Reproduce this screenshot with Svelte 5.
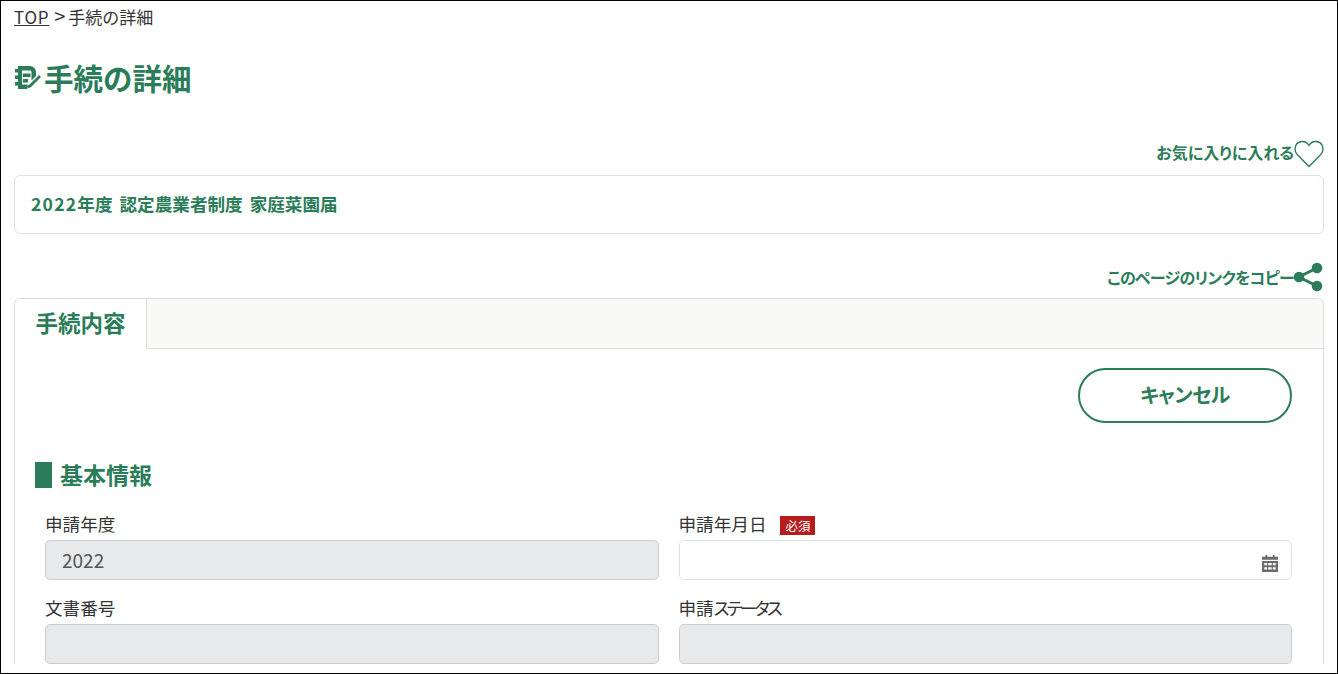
<script lang="ts">
	const fields = [
		{ label: '申請年度', value: '2022', disabled: true },
		{ label: '申請年月日', value: '', required: true, calendar: true },
		{ label: '文書番号', value: '', disabled: true },
		{ label: '申請', kana: 'ステータス', value: '', disabled: true }
	];
</script>

<div class="page">
	<nav class="crumbs"><a href="#top">TOP</a><span class="sep">&gt;</span>手続の詳細</nav>

	<h1 class="title">
		<svg class="title-icon" viewBox="0 0 26 23" width="26" height="23" aria-hidden="true">
			<path d="M3 0h12a6 6 0 0 1 6 6v4l-4.500 4.500V6a1.500 1.500 0 0 0-1.500-1.500H7v14h5.500V23H3z" fill="#2a7d58" />
			<path d="M0 3h3.500v3.500H0zM0 9.500h3.500V13H0zM0 16h3.500v3.500H0z" fill="#2a7d58" />
			<path d="M8 7.500h7.500v3.500H8zM8 13h5v3.500H8z" fill="#2a7d58" />
			<path d="M25 10 15 20l-2.500 1" fill="none" stroke="#2a7d58" stroke-width="2.800" />
		</svg>
		<span class="title-text">手続の詳細</span>
	</h1>

	<div class="action fav">
		<span>お気に入りに入れる</span>
		<svg viewBox="0 0 30 28" width="30" height="28" aria-hidden="true">
			<path d="M15 26.500 3.200 14.500C-.5 10.500.5 2 8 1.500 11 1.300 13.500 3 15 5.500 16.500 3 19 1.300 22 1.500c7.500.5 8.500 9 4.800 13z" fill="#fff" stroke="#2a7d58" stroke-width="1.400" />
		</svg>
	</div>

	<div class="name-card"><span><span class="year">2022</span>年度 認定農業者制度 家庭菜園届</span></div>

	<div class="action share">
		<span>このページのリンクをコピー</span>
		<svg viewBox="0 0 30 30" width="30" height="30" aria-hidden="true">
			<path d="M23 6 4.800 15 23 24" fill="none" stroke="#2a7d58" stroke-width="3" />
			<circle cx="23" cy="6" r="5.300" fill="#2a7d58" />
			<circle cx="5" cy="15" r="5.300" fill="#2a7d58" />
			<circle cx="23" cy="24" r="5.300" fill="#2a7d58" />
		</svg>
	</div>

	<section class="panel">
		<div class="tabs">
			<div class="tab"><span>手続内容</span></div>
		</div>
		<div class="panel-body">
			<div class="buttons">
				<button class="cancel"><span>キャンセル</span></button>
			</div>
			<h2 class="section-head"><span>基本情報</span></h2>
			<div class="form">
				{#each fields as f}
					<div class="field">
						<div class="label">
							{f.label}{#if f.kana}<span class="kana">{f.kana}</span>{/if}
							{#if f.required}<span class="req">必須</span>{/if}
						</div>
						<div class="input" class:disabled={f.disabled}>
							{f.value}
							{#if f.calendar}
								<svg class="cal" viewBox="1 1.500 14 14" width="16" height="17" preserveAspectRatio="none" aria-hidden="true">
									<path d="M1 3h3V1.500h1.500V3h5V1.500H12V3h3v2.500H1z" fill="#6b6b6b" />
									<path fill-rule="evenodd" d="M1 6.500h14v9H1zM3 8v2h2.500V8zm3.500 0v2h3V8zm4 0v2H13V8zM3 11.500v2h2.500v-2zm3.500 0v2h3v-2zm4 0v2H13v-2z" fill="#6b6b6b" />
								</svg>
							{/if}
						</div>
					</div>
				{/each}
			</div>
		</div>
	</section>
</div>

<style>
	:global(body) {
		margin: 0;
		background: #fff;
	}

	.page {
		box-sizing: border-box;
		height: 674px;
		overflow: hidden;
		border: 1px solid #000;
		padding: 0 13px;
		font-family: "Noto Sans CJK JP", "Noto Sans", sans-serif;
		color: #333;
		font-size: 17px;
	}

	.crumbs {
		height: 32px;
		line-height: 32px;
		font-size: 17px;
	}

	.crumbs a {
		color: #333;
		letter-spacing: 0.7px;
	}

	.sep {
		margin: 0 3px 0 5px;
		font-size: 20px;
		line-height: 1;
	}

	.title {
		display: flex;
		align-items: center;
		gap: 3px;
		margin: 24px 0 0 1px;
		height: 44px;
		font-size: 29.500px;
		font-weight: 700;
		color: #2a7d58;
	}

	.title-icon {
		flex: none;
		margin-top: -3px;
	}

	.title-text {
		padding-bottom: 4px;
	}

	.action {
		display: flex;
		justify-content: flex-end;
		align-items: center;
		font-size: 16px;
		font-weight: 700;
		color: #2a7d58;
		font-feature-settings: "palt";
	}

	.fav {
		margin-top: 38px;
		height: 30px;
	}

	.fav span {
		padding-bottom: 5px;
	}

	.share {
		margin-top: 28px;
		height: 30px;
		letter-spacing: -0.7px;
	}

	.name-card {
		box-sizing: border-box;
		height: 59px;
		margin-top: 6px;
		padding: 0 16px 3px;
		display: flex;
		align-items: center;
		border: 1px solid #e0e0e0;
		border-radius: 6px;
		font-size: 17.600px;
		font-weight: 700;
		word-spacing: 3px;
		color: #2a7d58;
	}

	.year {
		letter-spacing: 1.200px;
	}

	.panel {
		margin-top: 6px;
		border: 1px solid #ddd;
		border-bottom: none;
		border-radius: 6px 6px 0 0;
	}

	.tabs {
		display: flex;
		box-sizing: border-box;
		height: 50px;
		background: #f9f9f7;
		border-bottom: 1px solid #ddd;
		border-radius: 6px 6px 0 0;
	}

	.tab {
		box-sizing: border-box;
		width: 132px;
		height: 50px;
		display: flex;
		align-items: center;
		justify-content: center;
		padding-bottom: 4px;
		background: #fff;
		border-right: 1px solid #ddd;
		border-radius: 6px 0 0 0;
		font-size: 22.500px;
		font-weight: 700;
		color: #2a7d58;
	}

	.panel-body {
		padding: 19px 31px 0 20px;
	}

	.buttons {
		display: flex;
		justify-content: flex-end;
	}

	.cancel {
		width: 214px;
		height: 55px;
		padding: 0 0 3px;
		background: #fff;
		border: 2px solid #2a7d58;
		border-radius: 28px;
		font: inherit;
		font-size: 20px;
		font-weight: 700;
		letter-spacing: -0.5px;
		color: #2a7d58;
		font-feature-settings: "palt";
	}

	.section-head {
		display: flex;
		align-items: center;
		box-sizing: border-box;
		height: 26px;
		margin: 39px 0 0;
		padding: 0 0 2px 8px;
		border-left: 17px solid #2a7d58;
		font-size: 23px;
		font-weight: 700;
		color: #2a7d58;
	}

	.form {
		display: grid;
		grid-template-columns: 1fr 1fr;
		column-gap: 20px;
		row-gap: 16px;
		margin-top: 24px;
		padding-left: 10px;
	}

	.label {
		height: 28px;
		line-height: 24px;
		font-size: 17.600px;
		font-feature-settings: "palt";
	}

	.kana {
		letter-spacing: -2.800px;
	}

	.req {
		display: inline-block;
		margin-left: 10px;
		padding: 0 5px;
		background: #b71c1c;
		color: #fff;
		font-size: 12.500px;
		line-height: 19px;
		vertical-align: 0;
	}

	.input {
		box-sizing: border-box;
		display: flex;
		align-items: center;
		height: 40px;
		padding: 0 16px 2px;
		background: #fff;
		border: 1px solid #d8e4e0;
		border-radius: 5px;
		font-size: 19px;
		color: #555;
	}

	.input.disabled {
		background: #e8e9eb;
		border-color: #ccc;
	}

	.cal {
		margin-left: auto;
		margin-right: -3px;
		margin-top: 8px;
	}
</style>
